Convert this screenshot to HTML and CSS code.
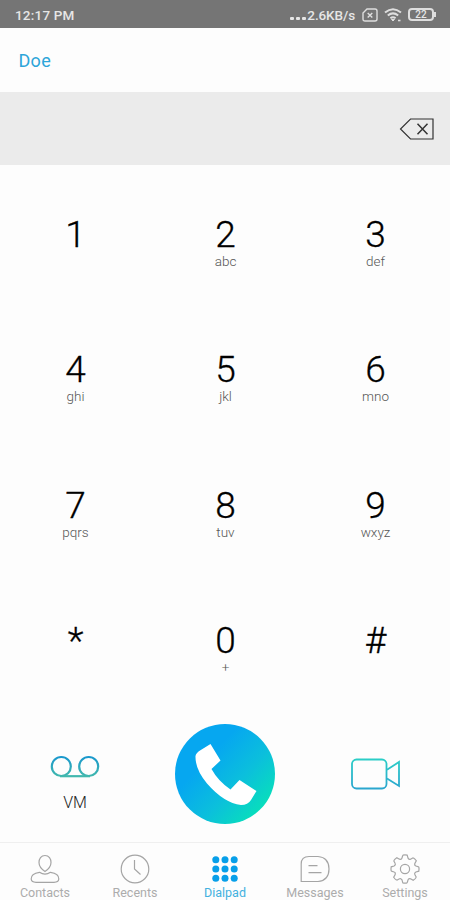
FILE: index.html
```html
<!DOCTYPE html>
<html lang="en">
<head>
<meta charset="utf-8">
<title>Dialpad</title>
<link rel="stylesheet" href="styles.css">
</head>
<body>
<div class="phone">
  <div class="status">
    <span class="clock">12:17 PM</span>
    <span class="dots"><i></i><i></i><i></i></span>
    <span class="speed">2.6KB/s</span>
    <svg class="sim" width="16" height="14" viewBox="0 0 16 14" fill="none" stroke="#dedede" stroke-width="1.4"><path d="M5 1H13Q15 1 15 3V11Q15 13 13 13H3Q1 13 1 11V5Z"/><path d="M5.7 5L10.3 9.6M10.3 5L5.7 9.6"/></svg>
    <svg class="wifi" width="18" height="14" viewBox="0 0 18 14" fill="none" stroke="#dedede" stroke-width="2"><path d="M1 4.6Q9-2 17 4.6M3.8 7.5Q9 3.2 14.2 7.5M6.4 10.3Q9 8.2 11.6 10.3"/><path d="M7.5 11.5L9 13L10.5 11.5Z" fill="#dedede" stroke-width="1"/><path d="M14 12.5H16.5" stroke-width="1.6"/></svg>
    <span class="battery">22</span>
  </div>
  <header class="header">Doe</header>
  <div class="entry">
    <svg width="36" height="24" viewBox="0 0 36 24" fill="none" stroke="#333" stroke-width="1.2"><path d="M11.5 2H34V22H11.5L1.5 12Z"/><path d="M18.5 6.8L28.5 17.2M28.5 6.8L18.5 17.2" stroke-width="1.5"/></svg>
  </div>
  <main class="keypad">
    <div class="key"><b>1</b></div>
    <div class="key"><b>2</b><small>abc</small></div>
    <div class="key"><b>3</b><small>def</small></div>
    <div class="key"><b>4</b><small>ghi</small></div>
    <div class="key"><b>5</b><small>jkl</small></div>
    <div class="key"><b>6</b><small>mno</small></div>
    <div class="key"><b>7</b><small>pqrs</small></div>
    <div class="key"><b>8</b><small>tuv</small></div>
    <div class="key"><b>9</b><small>wxyz</small></div>
    <div class="key"><b>*</b></div>
    <div class="key"><b>0</b><small>+</small></div>
    <div class="key"><b>#</b></div>
  </main>
  <section class="actions">
    <div class="voicemail">
      <svg width="50" height="24" viewBox="0 0 50 24" fill="none" stroke="url(#vm)" stroke-width="2.2"><defs><linearGradient id="vm" gradientUnits="userSpaceOnUse" x1="0" y1="0" x2="0" y2="24"><stop stop-color="#1595d0"/><stop offset="1" stop-color="#46bca9"/></linearGradient></defs><circle cx="11.3" cy="11.5" r="9.5"/><circle cx="38.7" cy="11.5" r="9.5"/><path d="M10 21.2H40"/></svg>
      <span>VM</span>
    </div>
    <svg class="call" width="100" height="100" viewBox="0 0 100 100"><defs><linearGradient id="cg" x1="0.1" y1="0.1" x2="0.9" y2="0.85"><stop offset=".3" stop-color="#06a7f0"/><stop offset=".65" stop-color="#0bbfdc"/><stop offset="1" stop-color="#08e0ba"/></linearGradient></defs><circle cx="50" cy="50" r="50" fill="url(#cg)"/><path fill="#fff" d="M35.5 20L45.5 36.5L36.5 45Q43 57 55.5 65.5L64.5 56L81.5 67L76 76Q73 81 66 81Q49 79 32 59.5Q20 45 20.5 32Q21 29 25 26.5Z"/></svg>
    <svg class="video" width="50" height="34" viewBox="0 0 50 34" fill="none" stroke="url(#vg)" stroke-width="1.8"><defs><linearGradient id="vg" gradientUnits="userSpaceOnUse" x1="0" y1="0" x2="0" y2="34"><stop stop-color="#2bd0c6"/><stop offset="1" stop-color="#2aa3cf"/></linearGradient></defs><rect x="2" y="2.5" width="34.5" height="29" rx="4.5"/><path d="M37 12.8L49 5V29L37 21.5"/></svg>
  </section>
  <nav class="tabs">
    <div class="tab"><svg width="30" height="30" viewBox="-15 -15 30 30"><path d="M0-13.5C4-13.5 6-10 6-6.5C6-2 3 .5 0 2.5C-3 .5-6-2-6-6.5C-6-10-4-13.5 0-13.5Z"/><path d="M-5.5 3.3Q0 7 5.5 3.3Q14 4.5 13.8 10Q13.5 13.3 9 13.3H-9Q-13.5 13.3-13.8 10Q-14 4.5-5.5 3.3Z"/></svg><span>Contacts</span></div>
    <div class="tab"><svg width="30" height="30" viewBox="-15 -15 30 30"><circle r="13.8"/><path d="M-.5-9V0L5.5 5.5"/></svg><span>Recents</span></div>
    <div class="tab active"><svg width="30" height="30" viewBox="-15 -15 30 30"><g><circle cx="-9.2" cy="-9.2" r="3.5"/><circle cy="-9.2" r="3.5"/><circle cx="9.2" cy="-9.2" r="3.5"/><circle cx="-9.2" r="3.5"/><circle r="3.5"/><circle cx="9.2" r="3.5"/><circle cx="-9.2" cy="9.2" r="3.5"/><circle cy="9.2" r="3.5"/><circle cx="9.2" cy="9.2" r="3.5"/></g></svg><span>Dialpad</span></div>
    <div class="tab"><svg width="30" height="30" viewBox="-15 -15 30 30"><path d="M-13.8 12.5V-5Q-13.8-12.5-6-12.5H3Q14-11.5 14 0T3 12.5ZM-6.5-3.3H2.5M-6.5 3.7H6.5"/></svg><span>Messages</span></div>
    <div class="tab"><svg width="30" height="30" viewBox="-15 -15 30 30"><defs><path id="tooth" d="M13.8-2.2Q14.3 0 13.8 2.2L10.9 3Q9 4.2 9.8 5.5L11.3 8.2"/></defs><use href="#tooth"/><use href="#tooth" transform="rotate(45)"/><use href="#tooth" transform="rotate(90)"/><use href="#tooth" transform="rotate(135)"/><use href="#tooth" transform="rotate(180)"/><use href="#tooth" transform="rotate(225)"/><use href="#tooth" transform="rotate(270)"/><use href="#tooth" transform="rotate(315)"/><circle r="4.6"/></svg><span>Settings</span></div>
  </nav>
</div>
</body>
</html>
```

FILE: styles.css
```css
* { box-sizing: border-box; }
body { margin: 0; font-family: Roboto, sans-serif; background: #fdfdfd; }
.phone { width: 450px; height: 900px; display: flex; flex-direction: column; overflow: hidden; }
.status { height: 28px; flex: none; background: #757575; color: #e6e6e6; display: flex; align-items: center; padding: 1px 13px 0 15px; font-size: 13.5px; font-weight: 500; }
.clock { margin-right: auto; letter-spacing: .2px; }
.dots { display: flex; gap: 2px; margin: 8px 1px 0 0; }
.dots i { width: 4px; height: 3px; background: #e6e6e6; border-radius: 1px; }
.speed { letter-spacing: -.1px; }
.sim { margin-left: 7px; }
.wifi { margin-left: 6px; }
.battery { position: relative; width: 26px; height: 13px; margin: 0 3px 0 6px; border: 2px solid #dedede; border-radius: 4px; font-size: 10px; line-height: 9px; text-align: center; }
.battery::after { content: ""; position: absolute; right: -4px; top: 2px; width: 2px; height: 5px; background: #dedede; }
.header { height: 64px; flex: none; padding-left: 18.5px; line-height: 66px; font-size: 18px; letter-spacing: .3px; color: #2da5d9; }
.entry { height: 73px; flex: none; background: #ebebeb; display: flex; align-items: center; justify-content: flex-end; padding-right: 15px; }
.keypad { height: 541px; flex: none; display: grid; grid-template: repeat(4, 1fr) / repeat(3, 1fr); }
.key { display: flex; flex-direction: column; align-items: center; padding: 48px 0 0 1px; }
.key b { font-size: 37px; line-height: 44px; font-weight: 300; color: #000; -webkit-text-stroke: .3px #000; }
.key small { font-size: 13.5px; line-height: 16px; margin-top: -4px; font-weight: 300; color: #555; }
.actions { height: 136px; flex: none; display: grid; grid-template-columns: repeat(3, 1fr); justify-items: center; align-items: center; }
.voicemail { display: flex; flex-direction: column; align-items: center; gap: 14px; padding-top: 20px; font-size: 16px; line-height: 20px; font-weight: 300; color: #222; }
.tabs { flex: 1; display: grid; grid-template-columns: repeat(5, 1fr); border-top: 1px solid #efefef; padding-top: 11px; }
.tab { display: flex; flex-direction: column; align-items: center; font-size: 12.5px; line-height: 17px; color: #acacac; }
.tab svg { flex: none; fill: none; stroke: #a5a5a5; stroke-width: 1.2; }
.tab.active { color: #43b1df; }
.active svg { stroke: none; fill: #079fe9; }
```
